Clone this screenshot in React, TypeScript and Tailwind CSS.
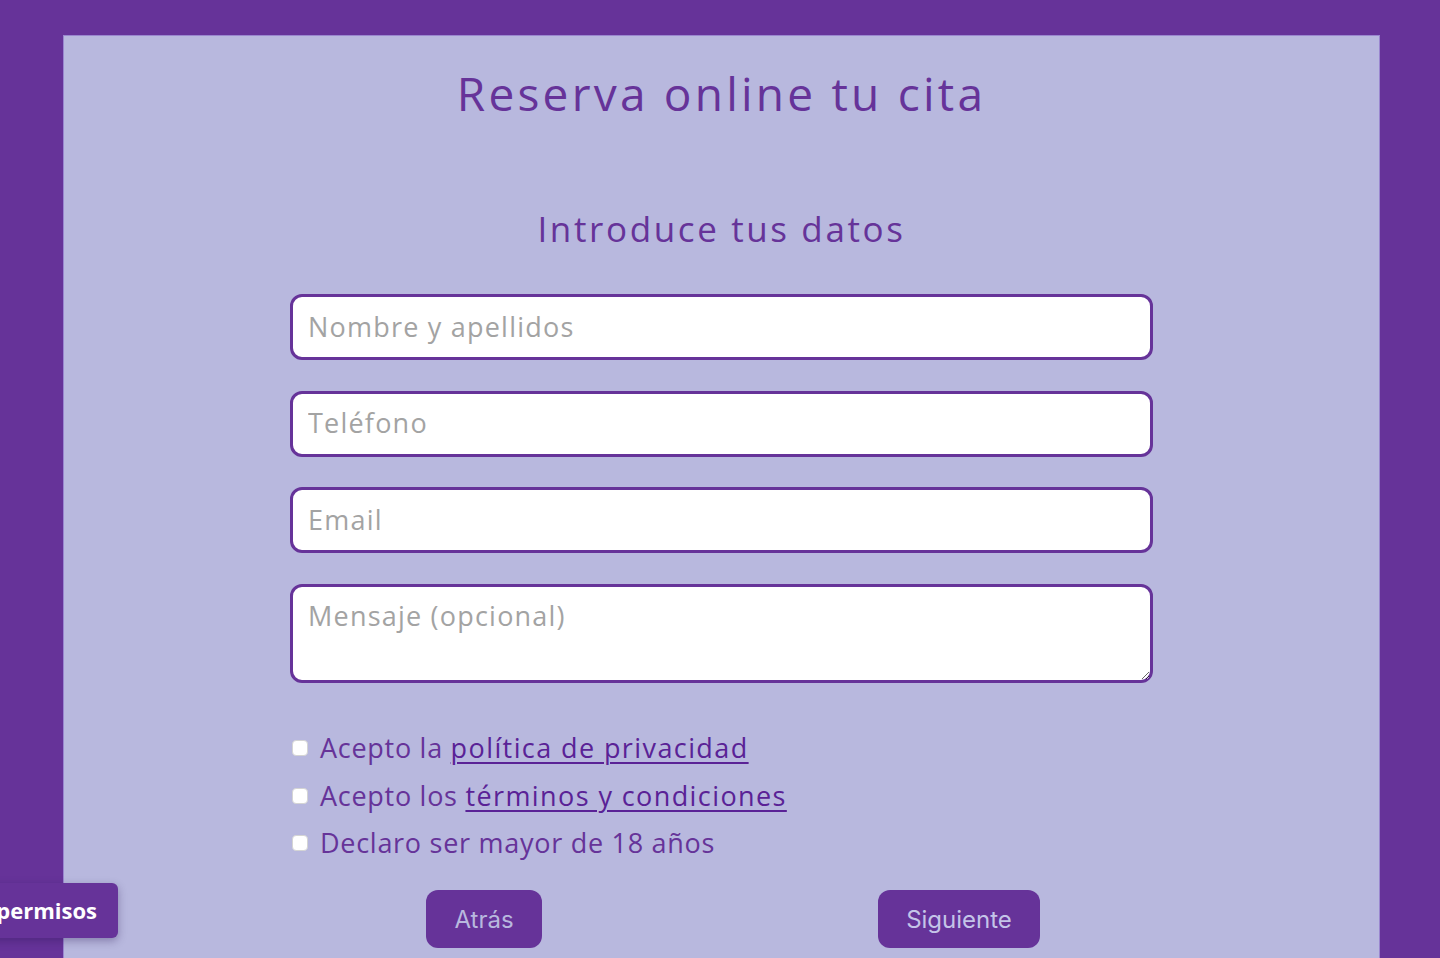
import React from "react";

export default function App() {
  const font = { fontFamily: '"Open Sans", "Noto Sans", sans-serif' };
  return (
    <div className="relative min-h-[958px] w-full overflow-hidden bg-[#663399]" style={font}>
      <div className="ml-[63px] mt-[35px] min-h-[923px] w-[1317px] border border-b-0 border-[#9a86cf] bg-[#b8b8de] pt-[30px]">
        <h1 className="text-center text-[46px] leading-[55px] font-normal text-[#663399] tracking-[0.07em]">
          Reserva online tu cita
        </h1>
        <h2 className="mt-[87px] text-center text-[35px] leading-[42px] font-normal text-[#663399] tracking-[0.075em]">
          Introduce tus datos
        </h2>
        <form className="mx-auto mt-[44px] flex w-[863px] flex-col">
          <div className="flex flex-col gap-[30.5px]">
            <input
              placeholder="Nombre y apellidos"
              className="h-[66px] w-full rounded-[12px] border-[3px] border-[#663399] bg-white px-[15px] pb-[2px] text-[27px] tracking-[0.045em] text-[#333] placeholder:text-[#a3a3a3] outline-none"
            />
            <input
              placeholder="Teléfono"
              className="h-[66px] w-full rounded-[12px] border-[3px] border-[#663399] bg-white px-[15px] pb-[2px] text-[27px] tracking-[0.045em] text-[#333] placeholder:text-[#a3a3a3] outline-none"
            />
            <input
              placeholder="Email"
              className="h-[66px] w-full rounded-[12px] border-[3px] border-[#663399] bg-white px-[15px] pb-[2px] text-[27px] tracking-[0.045em] text-[#333] placeholder:text-[#a3a3a3] outline-none"
            />
            <textarea
              placeholder="Mensaje (opcional)"
              className="block h-[99px] w-full rounded-[12px] border-[3px] border-[#663399] bg-white px-[15px] pt-[13px] text-[27px] leading-[32px] tracking-[0.045em] text-[#333] placeholder:text-[#a3a3a3] outline-none"
            />
          </div>
          <div className="mt-[42px] flex flex-col tracking-[0.045em]">
            <label className="flex h-[47.5px] items-center text-[27px] text-[#663399]">
              <input type="checkbox" className="ml-[2px] mr-[12px] h-[16px] w-[16px] appearance-none rounded-[4px] border border-[#d4d4d4] bg-white" />
              <span>
                Acepto la <a href="#" className="tracking-[0.052em] text-[#5a2296] underline underline-offset-[4px] decoration-[2px]">política de privacidad</a>
              </span>
            </label>
            <label className="flex h-[47.5px] items-center text-[27px] text-[#663399]">
              <input type="checkbox" className="ml-[2px] mr-[12px] h-[16px] w-[16px] appearance-none rounded-[4px] border border-[#d4d4d4] bg-white" />
              <span>
                Acepto los <a href="#" className="tracking-[0.052em] text-[#5a2296] underline underline-offset-[4px] decoration-[2px]">términos y condiciones</a>
              </span>
            </label>
            <label className="flex h-[47.5px] items-center text-[27px] text-[#663399]">
              <input type="checkbox" className="ml-[2px] mr-[12px] h-[16px] w-[16px] appearance-none rounded-[4px] border border-[#d4d4d4] bg-white" />
              <span>Declaro ser mayor de 18 años</span>
            </label>
          </div>
        </form>
        <div className="mx-auto mt-[23px] grid w-[950px] grid-cols-2">
          <div className="flex justify-center">
            <button
              type="button"
              className="h-[58px] w-[116px] rounded-[12px] bg-[#663399] pt-[2px] text-[24px] text-[#b8b8de]"
              style={{ fontFamily: 'Inter, "Noto Sans", sans-serif' }}
            >
              Atrás
            </button>
          </div>
          <div className="flex justify-center">
            <button
              type="button"
              className="h-[58px] w-[162px] rounded-[12px] bg-[#663399] pt-[2px] text-[24px] text-[#c4c4e8]"
              style={{ fontFamily: 'Inter, "Noto Sans", sans-serif' }}
            >
              Siguiente
            </button>
          </div>
        </div>
      </div>
      <button
        type="button"
        className="absolute right-[calc(100%-118px)] top-[883px] h-[55px] whitespace-nowrap rounded-r-[6px] bg-[#663399] pl-[20px] pr-[21px] text-[22px] font-bold text-white shadow-[0_3px_8px_rgba(40,20,80,0.35)]"
      >
        Gestionar permisos
      </button>
    </div>
  );
}
